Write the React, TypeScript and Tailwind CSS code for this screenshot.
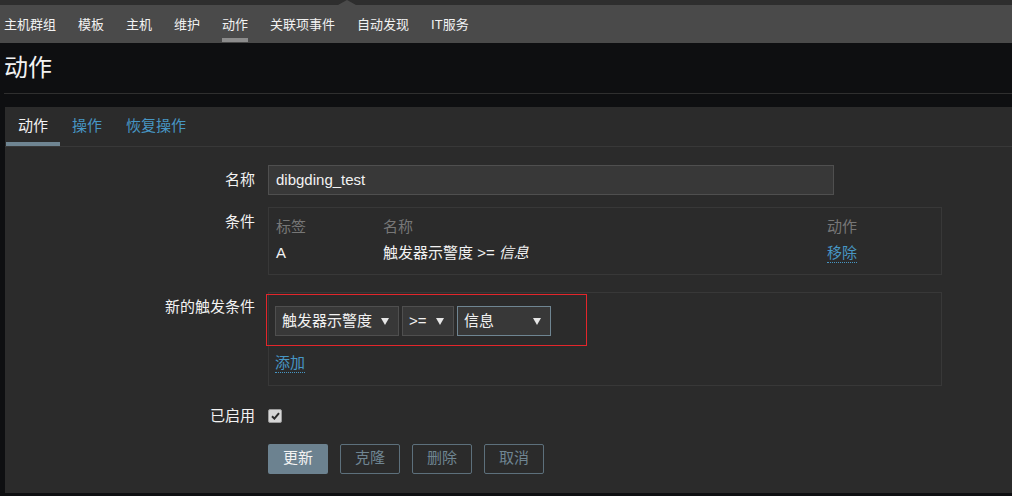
import React from "react";

const navItems = ["主机群组", "模板", "主机", "维护", "动作", "关联项事件", "自动发现", "IT服务"];
const tabs = ["动作", "操作", "恢复操作"];

function Caret() {
  return (
    <svg width="8" height="7" viewBox="0 0 8 7" className="shrink-0">
      <path d="M0 0 L8 0 L4 7 Z" fill="#e6e6e6" />
    </svg>
  );
}

function Select({ label, width, focused }: { label: string; width: string; focused?: boolean }) {
  return (
    <div
      className={`${width} h-[30px] flex items-center justify-between pl-[6px] pr-[9px] bg-[#383838] border ${
        focused ? "border-[#6f8592]" : "border-[#4f4f4f]"
      } text-[#f2f2f2]`}
    >
      <span>{label}</span>
      <Caret />
    </div>
  );
}

function Label({ children }: { children: React.ReactNode }) {
  return <div className="text-right pt-[6px] leading-[18px] text-[#f2f2f2]">{children}</div>;
}

export default function App() {
  return (
    <div
      className="w-[1012px] h-[496px] overflow-hidden bg-[#0e0f11] text-[15px]"
      style={{ fontFamily: '"Liberation Sans", "Noto Sans CJK SC", sans-serif' }}
    >
      {/* top strip */}
      <div className="relative h-[5px] bg-[#2e2e2e]">
        <svg className="absolute left-[338px] top-0" width="18" height="5" viewBox="0 0 18 5">
          <path d="M0 5 L9 0 L18 5 Z" fill="#4a4a4a" />
        </svg>
      </div>

      {/* main menu */}
      <nav className="h-[38px] bg-[#4a4a4a] flex items-stretch gap-[22px] pl-[4px] text-[13px] text-[#f2f2f2]">
        {navItems.map((item) => (
          <div key={item} className="relative flex items-center leading-none">
            {item}
            {item === "动作" && <div className="absolute left-0 right-0 bottom-[1px] h-[4px] bg-[#8c8c8c]" />}
          </div>
        ))}
      </nav>

      {/* page title */}
      <div className="ml-[4px] h-[51px] flex items-center border-b border-[#2f2f2f]">
        <h1 className="text-[24px] leading-none text-[#f2f2f2] font-normal">动作</h1>
      </div>

      {/* panel */}
      <div className="ml-[5px] mt-[13px] h-[386px] bg-[#2b2b2b]">
        <div className="flex pl-[1px] h-[40px] border-b border-[#383838]">
          {tabs.map((t, i) => (
            <div
              key={t}
              className={`relative h-[39px] px-[12px] flex items-center ${
                i === 0 ? "text-[#f2f2f2]" : "text-[#4796c4]"
              }`}
            >
              {t}
              {i === 0 && <div className="absolute left-0 right-0 bottom-0 h-[4px] bg-[#6f8592]" />}
            </div>
          ))}
        </div>

        <div className="grid grid-cols-[250px_1fr] gap-x-[13px] pt-[18px]">
          {/* name */}
          <Label>名称</Label>
          <div>
            <div className="w-[566px] h-[30px] flex items-center pl-[7px] bg-[#383838] border border-[#4f4f4f] text-[#f2f2f2]">
              dibgding_test
            </div>
          </div>

          {/* conditions */}
          <div className="mt-[12px]">
            <Label>条件</Label>
          </div>
          <div className="mt-[12px]">
            <div className="w-[674px] border border-[#383838] px-[7px] pt-[8px] pb-[12px]">
              <div className="grid grid-cols-[107px_1fr_107px] h-[20px] items-center text-[#777777]">
                <span>标签</span>
                <span>名称</span>
                <span>动作</span>
              </div>
              <div className="grid grid-cols-[107px_1fr_107px] mt-[6px] h-[20px] items-center text-[#f2f2f2]">
                <span>A</span>
                <span>
                  触发器示警度 &gt;= <i>信息</i>
                </span>
                <span>
                  <span className="inline-block leading-[18px] border-b border-dotted border-[#4796c4] text-[#4796c4]">
                    移除
                  </span>
                </span>
              </div>
            </div>
          </div>

          {/* new condition */}
          <div className="mt-[17px]">
            <Label>新的触发条件</Label>
          </div>
          <div className="mt-[17px]">
            <div className="relative w-[674px] border border-[#383838] px-[6px] pt-[13px] pb-[10px]">
              <div className="flex gap-[3px]">
                <Select label="触发器示警度" width="w-[124px]" />
                <Select label=">=" width="w-[52px]" />
                <Select label="信息" width="w-[94px]" focused />
              </div>
              <div className="mt-[16px]">
                <span className="inline-block leading-[18px] border-b border-dotted border-[#4796c4] text-[#4796c4]">
                  添加
                </span>
              </div>
              <div className="absolute -left-[3px] top-[1px] w-[321px] h-[52px] border border-[#e3262b]" />
            </div>
          </div>

          {/* enabled */}
          <div className="mt-[15px]">
            <Label>已启用</Label>
          </div>
          <div className="mt-[15px] h-[30px] flex items-center">
            <div className="w-[14px] h-[14px] rounded-[2px] bg-[#d6d6d6] border border-[#9a9a9a] flex items-center justify-center">
              <svg width="9" height="8" viewBox="0 0 9 8">
                <path d="M1 4.2 L3.4 6.6 L8 1.2" stroke="#2b2b2b" strokeWidth="2" fill="none" />
              </svg>
            </div>
          </div>

          {/* buttons */}
          <div />
          <div className="mt-[13px] flex gap-[12px]">
            <button className="w-[60px] h-[30px] rounded-[2px] bg-[#6c8290] text-[#f2f2f2]">更新</button>
            {["克隆", "删除", "取消"].map((b) => (
              <button
                key={b}
                className="w-[60px] h-[30px] rounded-[2px] border border-[#5d707c] text-[#6f8592]"
              >
                {b}
              </button>
            ))}
          </div>
        </div>
      </div>
    </div>
  );
}
